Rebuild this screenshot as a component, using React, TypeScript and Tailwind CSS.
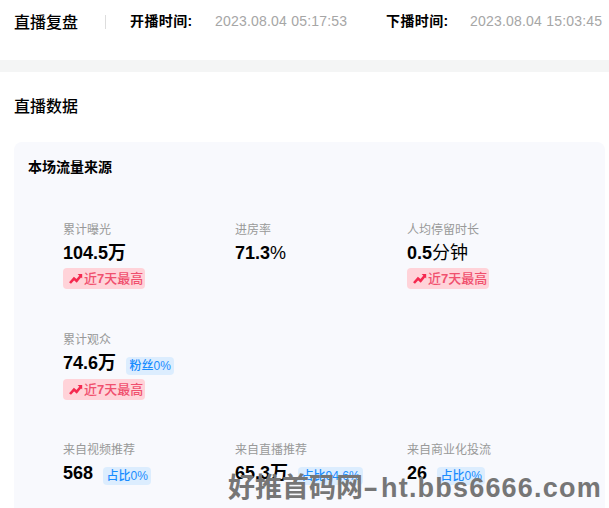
const font = "font-['Liberation_Sans','Noto_Sans_CJK_SC',sans-serif]";

function Trend() {
  return (
    <svg width="14" height="12" viewBox="0 0 14 12" className="mr-px shrink-0" fill="none">
      <path d="M1 10 L5 5.6 L7.6 7.8 L11.6 3" stroke="#f5294f" strokeWidth="2.6" />
      <path d="M8.6 1 H13.2 V5.6 Z" fill="#f5294f" />
    </svg>
  );
}

function Hot() {
  return (
    <div className="mt-[2px] flex h-[21px] w-[82px] items-center rounded-[4px] bg-[#ffd3d9] pl-[6px] text-[13px] font-medium text-[#f0506e]">
      <Trend />
      <span className="whitespace-nowrap">
        近<b className="font-bold">7</b>天最高
      </span>
    </div>
  );
}

function Tag({ children }: { children: React.ReactNode }) {
  return (
    <span className="ml-[10px] mt-[4px] inline-flex h-[18px] items-center whitespace-nowrap rounded-[4px] bg-[#dcedfe] px-[3.5px] text-[12px] font-medium text-[#1a8cff]">
      {children}
    </span>
  );
}

function Stat({ label, value, unit, tag, hot, boldUnit }: { label: string; value: string; unit?: string; tag?: string; hot?: boolean; boldUnit?: boolean }) {
  return (
    <div className="h-[110px]">
      <div className="h-[17px] whitespace-nowrap text-[12px] leading-[17px] text-[#999999]">{label}</div>
      <div className={`mt-[1px] flex items-center whitespace-nowrap ${tag ? "h-[27px]" : "h-[26px]"}`}>
        <span className="text-[18px] font-bold text-black">{value}</span>
        {unit && <span className={`text-[18px] text-black ${boldUnit ? "font-bold" : "font-normal"}`}>{unit}</span>}
        {tag && <Tag>{tag}</Tag>}
      </div>
      {hot && <Hot />}
    </div>
  );
}

export default function App() {
  return (
    <div className={`relative h-[508px] w-[609px] overflow-hidden bg-white ${font}`}>
      <header className="flex h-[60px] items-start pl-[14px] pt-[12px]">
        <h1 className="w-[91px] text-[16px] font-medium leading-[21px] text-black">直播复盘</h1>
        <div className="mt-[3px] h-[14px] w-px bg-[#dddddd]" />
        <div className="ml-[24px] flex w-[256px] text-[14px] leading-[19px]">
          <span className="w-[85px] font-bold tracking-[0.4px] text-black">开播时间:</span>
          <span className="whitespace-nowrap tracking-[0.2px] text-[#a6a6a6]">2023.08.04 05:17:53</span>
        </div>
        <div className="flex text-[14px] leading-[19px]">
          <span className="w-[84px] font-bold tracking-[0.4px] text-black">下播时间:</span>
          <span className="whitespace-nowrap tracking-[0.2px] text-[#a6a6a6]">2023.08.04 15:03:45</span>
        </div>
      </header>
      <div className="h-[12px] bg-[#f4f5f5]" />
      <h2 className="pl-[14px] pt-[24px] text-[16px] font-medium leading-[22px] text-black">直播数据</h2>
      <section className="ml-[14px] mt-[24px] h-[400px] w-[591px] rounded-[8px] bg-[#f8f9fd] pl-[14px] pt-[16px]">
        <h3 className="text-[14px] font-bold leading-[18px] text-black">本场流量来源</h3>
        <div className="ml-[35px] mt-[46px] grid grid-cols-[172px_172px_172px]">
          <Stat label="累计曝光" value="104.5" unit="万" boldUnit hot />
          <Stat label="进房率" value="71.3" unit="%" />
          <Stat label="人均停留时长" value="0.5" unit="分钟" hot />
          <Stat label="累计观众" value="74.6" unit="万" boldUnit tag="粉丝0%" hot />
          <div />
          <div />
          <Stat label="来自视频推荐" value="568" tag="占比0%" />
          <Stat label="来自直播推荐" value="65.3" unit="万" boldUnit tag="占比94.6%" />
          <Stat label="来自商业化投流" value="26" tag="占比0%" />
        </div>
      </section>
      <div className="absolute left-[228px] top-[471px] whitespace-nowrap text-[27px] font-bold leading-[34px] text-[#767676]">
        好推首码网
        <span className="inline-block w-[18px] origin-left scale-x-[1.7]">-</span>
        <span className="tracking-[1.2px]">ht.bbs6666.com</span>
      </div>
    </div>
  );
}
